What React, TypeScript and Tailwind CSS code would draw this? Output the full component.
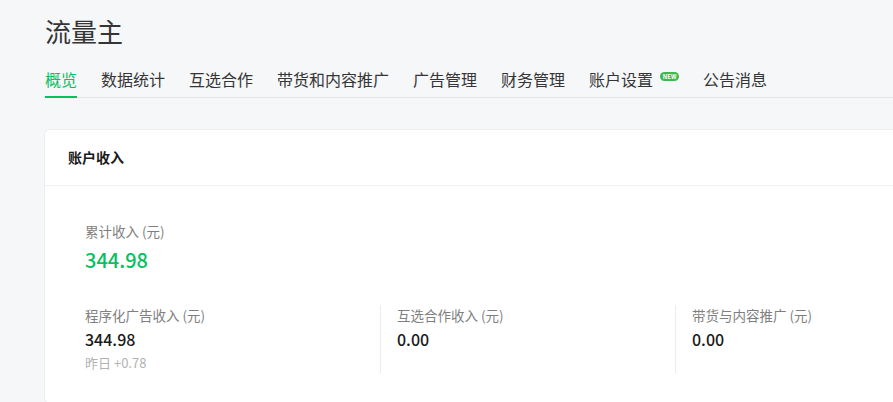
import React from "react";

const tabs = ["概览", "数据统计", "互选合作", "带货和内容推广", "广告管理", "财务管理", "账户设置", "公告消息"];

export default function App() {
  return (
    <div
      className="min-h-screen w-full overflow-hidden bg-[#f6f7f9] pl-[44px]"
      style={{ fontFamily: '"Noto Sans CJK SC", "Microsoft YaHei", sans-serif' }}
    >
      <div className="pt-[12px] pl-px text-[26px] leading-[38px] text-[#353535]">流量主</div>
      <div className="mt-[17px] flex gap-6 border-b border-[#e2e4e8] pl-px">
        {tabs.map((t, i) => (
          <div
            key={t}
            className={
              i === 0
                ? "-mb-px flex items-start border-b-2 border-[#07c160] pb-[5px] text-[16px] leading-[24px] text-[#07c160]"
                : "-mb-px flex items-start border-b-2 border-transparent pb-[5px] text-[16px] leading-[24px] text-[#353535]"
            }
          >
            <span>{t}</span>
            {t === "账户设置" && (
              <span className="ml-[7px] mt-[5px] flex h-[9px] w-[19px] items-center justify-center rounded-full bg-[#3db94d] text-[6px] font-bold leading-none text-white">
                NEW
              </span>
            )}
          </div>
        ))}
      </div>
      <div className="mt-[31px] w-[960px] rounded-[6px] border border-[#ebedf0] bg-white">
        <div className="flex h-[56px] items-center border-b border-[#eff0f2] px-[23px] text-[14px] font-semibold text-[#1a1a1a]">
          账户收入
        </div>
        <div className="pl-[40px] pt-[35px] pb-[30px]">
          <div className="text-[13.5px] leading-[20px] text-[#7f7f7f]">累计收入 (元)</div>
          <div className="mt-[5px] text-[20px] font-medium leading-[28px] text-[#07c160]">344.98</div>
          <div className="mt-[31px] flex">
            <div className="w-[295px]">
              <div className="text-[13.5px] leading-[20px] text-[#7f7f7f]">程序化广告收入 (元)</div>
              <div className="mt-[2px] text-[16px] font-medium leading-[24px] text-[#1a1a1a]">344.98</div>
              <div className="mt-[2px] text-[13px] leading-[20px] text-[#b2b2b2]">昨日 +0.78</div>
            </div>
            <div className="w-[295px] border-l border-[#ececec] pl-[16px]">
              <div className="text-[13.5px] leading-[20px] text-[#7f7f7f]">互选合作收入 (元)</div>
              <div className="mt-[2px] text-[16px] font-medium leading-[24px] text-[#1a1a1a]">0.00</div>
            </div>
            <div className="w-[295px] border-l border-[#ececec] pl-[16px]">
              <div className="text-[13.5px] leading-[20px] text-[#7f7f7f]">带货与内容推广 (元)</div>
              <div className="mt-[2px] text-[16px] font-medium leading-[24px] text-[#1a1a1a]">0.00</div>
            </div>
          </div>
        </div>
      </div>
    </div>
  );
}
